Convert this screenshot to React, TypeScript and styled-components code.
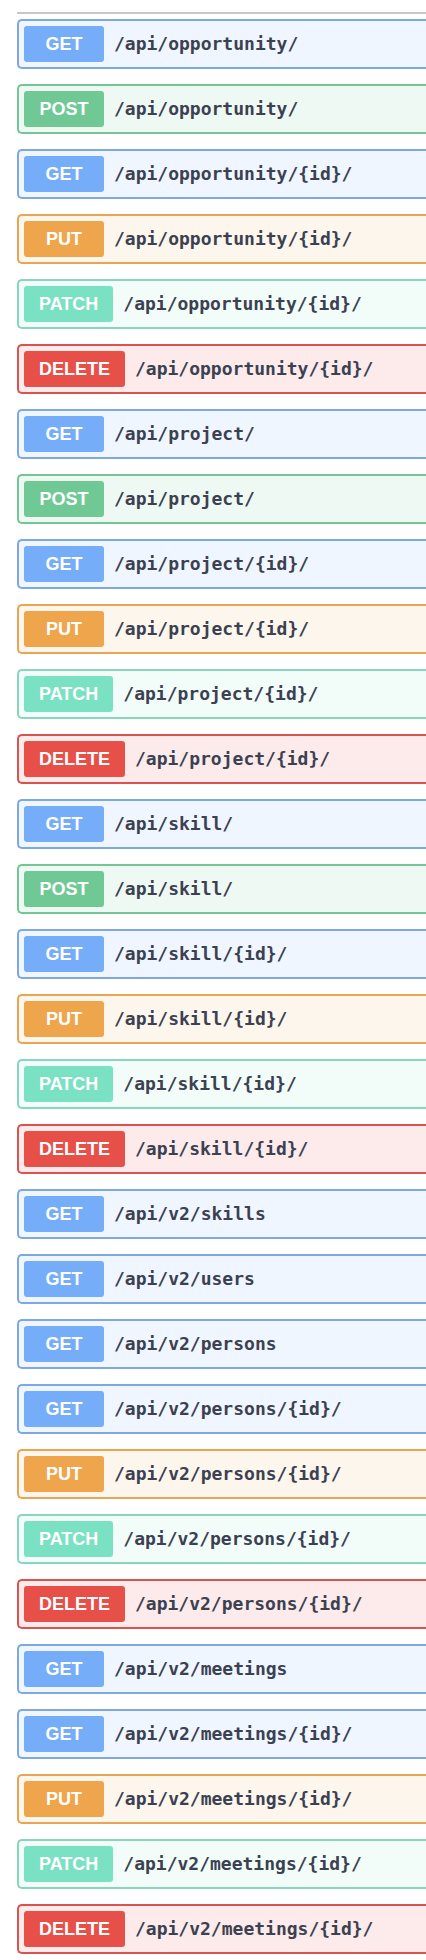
import React from 'react';
import styled, { createGlobalStyle } from 'styled-components';

type Method = 'GET' | 'POST' | 'PUT' | 'PATCH' | 'DELETE';

const palette: Record<Method, { solid: string; border: string; tint: string }> = {
  GET: { solid: '#75adf9', border: '#7da9e0', tint: '#f0f6ff' },
  POST: { solid: '#70c995', border: '#74c696', tint: '#eff9f3' },
  PUT: { solid: '#eea54b', border: '#e8a654', tint: '#fdf6ec' },
  PATCH: { solid: '#7be1c3', border: '#88d6bd', tint: '#f2fcf9' },
  DELETE: { solid: '#e65049', border: '#d95450', tint: '#fcebea' },
};

const crud = (path: string): [Method, string][] => [
  ['GET', path],
  ['PUT', path],
  ['PATCH', path],
  ['DELETE', path],
];

const collection = (path: string): [Method, string][] => [
  ['GET', path],
  ['POST', path],
  ...crud(`${path}{id}/`),
];

const operations: [Method, string][] = [
  ...collection('/api/opportunity/'),
  ...collection('/api/project/'),
  ...collection('/api/skill/'),
  ['GET', '/api/v2/skills'],
  ['GET', '/api/v2/users'],
  ['GET', '/api/v2/persons'],
  ...crud('/api/v2/persons/{id}/'),
  ['GET', '/api/v2/meetings'],
  ...crud('/api/v2/meetings/{id}/'),
];

const GlobalStyle = createGlobalStyle`
  * { box-sizing: border-box; }
  body { margin: 0; background: #fff; }
`;

const Section = styled.main`
  padding: 12px 0 6px 17px;
`;

const Divider = styled.hr`
  height: 2px;
  margin: 0 0 5px;
  border: 0;
  background: #c6c7ca;
`;

const List = styled.ul`
  display: flex;
  flex-direction: column;
  gap: 15px;
  margin: 0;
  padding: 0;
  list-style: none;
`;

const Operation = styled.button<{ $method: Method }>`
  display: flex;
  align-items: center;
  gap: 10px;
  width: 100%;
  padding: 5px;
  border: 2px solid ${(p) => palette[p.$method].border};
  border-right: 0;
  border-radius: 5px 0 0 5px;
  background: ${(p) => palette[p.$method].tint};
  text-align: left;
  cursor: pointer;
`;

const Badge = styled.span<{ $method: Method }>`
  min-width: 80px;
  padding: 0 15px;
  border-radius: 3px;
  background: ${(p) => palette[p.$method].solid};
  color: #fff;
  font: 700 18px/36px 'Liberation Sans', Arial, sans-serif;
  text-align: center;
`;

const Path = styled.span`
  color: #3b4151;
  font: 700 18px/24px 'DejaVu Sans Mono', monospace;
  white-space: nowrap;
`;

export default function App() {
  return (
    <>
      <GlobalStyle />
      <Section>
        <Divider />
        <List>
          {operations.map(([method, path]) => (
            <li key={`${method} ${path}`}>
              <Operation type="button" $method={method}>
                <Badge $method={method}>{method}</Badge>
                <Path>{path}</Path>
              </Operation>
            </li>
          ))}
        </List>
      </Section>
    </>
  );
}
